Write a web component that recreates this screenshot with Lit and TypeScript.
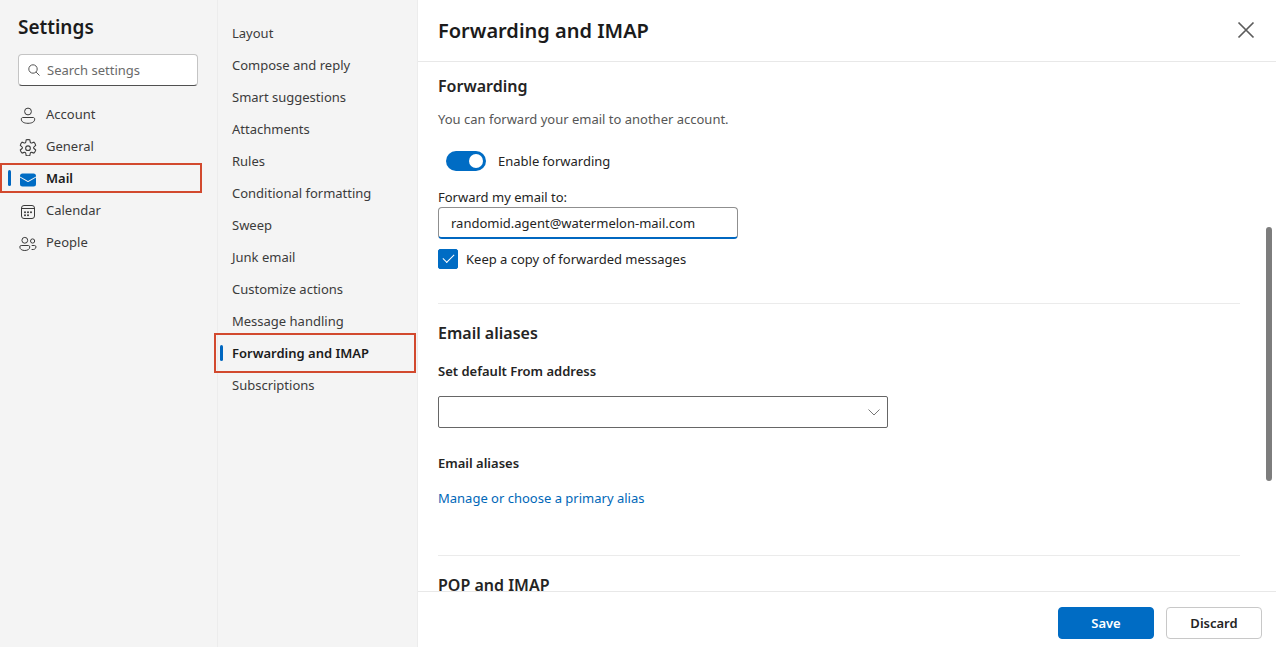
import { LitElement, html, css, svg } from "lit";
import { customElement, state } from "lit/decorators.js";
import { classMap } from "lit/directives/class-map.js";

const icons: Record<string, unknown> = {
  Account: svg`<circle cx="10" cy="5.500" r="3.400"/><path d="M4.800 11.500h10.400c.9 0 1.500.7 1.500 1.600 0 3-3 4.200-6.700 4.200s-6.700-1.200-6.700-4.200c0-.9.600-1.600 1.500-1.600Z"/>`,
  General: svg`<g transform="translate(-.7 -.5) scale(1.07)"><circle cx="10" cy="10" r="2.200"/><path d="M8.300 2.200c1.100-.3 2.300-.3 3.400 0l.4 2.100c.1.6.8 1 1.400.8l2-.7c.8.8 1.400 1.800 1.700 2.900l-1.600 1.400c-.5.4-.5 1.200 0 1.600l1.600 1.400c-.3 1.100-.9 2.100-1.700 2.900l-2-.7c-.6-.2-1.300.2-1.400.8l-.4 2.100c-1.100.3-2.300.3-3.400 0l-.4-2.100c-.1-.6-.8-1-1.400-.8l-2 .7c-.8-.8-1.400-1.800-1.700-2.900l1.600-1.400c.5-.4.5-1.200 0-1.600L2.800 7.300c.3-1.100.9-2.100 1.700-2.900l2 .7c.6.2 1.300-.2 1.400-.8Z"/></g>`,
  Mail: svg`<path class="solid" d="M2 7.600 9.700 12c.2.100.4.100.6 0L18 7.600V14a2.500 2.500 0 0 1-2.500 2.500h-11A2.500 2.500 0 0 1 2 14Z"/><path class="solid" d="M4.500 3.500h11A2.500 2.500 0 0 1 18 6v.5L10 11 2 6.500V6a2.500 2.500 0 0 1 2.500-2.500Z"/>`,
  Calendar: svg`<rect x="3.500" y="3.500" width="13" height="13" rx="2.500"/><path d="M3.500 6.500h13"/><g class="dots"><circle cx="7" cy="10.300" r="1"/><circle cx="10" cy="10.300" r="1"/><circle cx="13" cy="10.300" r="1"/><circle cx="7" cy="13.300" r="1"/><circle cx="10" cy="13.300" r="1"/></g>`,
  People: svg`<circle cx="6.800" cy="6.300" r="2.900"/><circle cx="14.600" cy="7" r="2.100"/><path d="M3.200 11.500h7.200c.8 0 1.400.6 1.400 1.400 0 2.300-2.200 3.600-5 3.600s-5-1.300-5-3.600c0-.8.6-1.400 1.400-1.400ZM13.700 11.500h2.900c.8 0 1.400.6 1.400 1.400 0 1.900-2 3-4.400 2.600"/>`,
};

const sections = ["Account", "General", "Mail", "Calendar", "People"];
const pages = [
  "Layout", "Compose and reply", "Smart suggestions", "Attachments", "Rules",
  "Conditional formatting", "Sweep", "Junk email", "Customize actions",
  "Message handling", "Forwarding and IMAP", "Subscriptions",
];

@customElement("app-root")
export class AppRoot extends LitElement {
  @state() private section = "Mail";
  @state() private page = "Forwarding and IMAP";

  static styles = css`
    :host {
      display: grid;
      grid-template-columns: 218px 200px minmax(0, 1fr);
      height: 100vh;
      overflow: hidden;
      background: #fff;
      color: #242424;
      font: 13px/20px "Noto Sans", sans-serif;
    }
    *, *::before, *::after { box-sizing: border-box; }
    h1, h2, h3, p, ul { margin: 0; padding: 0; }
    button, input, select { font: inherit; color: inherit; margin: 0; }
    svg { fill: none; stroke: currentColor; flex: none; }
    .solid, .dots { fill: currentColor; stroke: none; }

    .sidebar { background: #f4f4f4; border-right: 1px solid #ececec; padding-top: 13px; }
    .title { font-size: 20px; line-height: 28px; font-weight: 600; color: #1b1b1b; }
    .sidebar .title { padding-left: 18px; font-size: 19px; }
    .search {
      display: flex; align-items: center; gap: 7px;
      margin: 13px 19px 13px 18px; height: 32px; padding: 0 9px;
      background: #fff; border: 1px solid #c4c4c4; border-bottom-color: #505050;
      border-radius: 4px; color: #555;
    }
    .search input { border: 0; outline: 0; padding: 0; min-width: 0; flex: 1; background: none; }
    .search input::placeholder { color: #6a6a6a; opacity: 1; }

    ul { list-style: none; }
    li { position: relative; }
    .item {
      display: flex; align-items: center; gap: 8px; width: 100%; height: 32px;
      border: 0; background: none; text-align: left; cursor: pointer;
      padding: 0 0 2px 14px; color: #3b3b3b;
    }
    .sidebar .item { padding-left: 18px; }
    .item.current { font-weight: 600; color: #1b1b1b; }
    .item.current svg { color: #006cc4; }
    .current::before {
      content: ""; position: absolute; left: 2px; top: 7px;
      width: 3px; height: 16px; border-radius: 2px; background: #0067c0;
    }
    .sidebar .current::before { left: 8px; }
    .marker { position: absolute; border: 2px solid #d2492e; pointer-events: none; }
    .sidebar .marker { left: 0; right: 15px; top: 0; height: 30px; }
    .pages .marker { left: -4px; right: 1px; top: -5px; height: 40px; }
    .pages { background: #f4f4f4; border-right: 1px solid #ececec; padding-top: 18px; }

    .panel { display: flex; flex-direction: column; min-height: 0; position: relative; }
    .head {
      display: flex; align-items: center; justify-content: space-between;
      height: 62px; flex: none; padding: 0 20px; border-bottom: 1px solid #e8e8e8;
    }
    .close { display: flex; border: 0; background: none; padding: 0 0 2px; color: #5c5c5c; cursor: pointer; }
    .viewport { position: relative; flex: 1; min-height: 0; overflow: hidden; }
    .content { padding: 12px 36px 0 20px; }
    .group { border-bottom: 1px solid #ebebeb; margin-bottom: 17px; }
    h2 { font-size: 16px; line-height: 24px; font-weight: 600; color: #242424; }
    h3 { font-size: 13px; line-height: 20px; font-weight: 600; }
    .group.forwarding { padding-bottom: 34px; }
    .group.aliases { padding-bottom: 47px; }
    .hint { margin-top: 11px; color: #565656; }
    .row { display: flex; align-items: center; }
    .toggle-row { margin: 22px 0 16px 8px; gap: 12px; }
    .switch {
      appearance: none; width: 40px; height: 20px; border-radius: 10px;
      background: #c8c8c8; padding: 3px; display: flex;
    }
    .switch::before { content: ""; width: 14px; height: 14px; border-radius: 50%; background: #fff; }
    .switch:checked { background: #006cc4; justify-content: flex-end; }
    .label { display: block; }
    .address {
      display: block; width: 300px; max-width: 100%; height: 32px; padding: 1px 12px 0;
      border: 1px solid #8f8f8f; border-bottom: 2px solid #0067c0; border-radius: 4px;
      outline: 0; background: #fff;
    }
    .copy-row { margin-top: 10px; gap: 8px; }
    .check {
      appearance: none; width: 20px; height: 20px; border: 1px solid #616161;
      border-radius: 2px; display: grid; place-items: center;
    }
    .check:checked { background: #006cc4; border-color: #006cc4; }
    .check:checked::before {
      content: ""; width: 11px; height: 6px; border: solid #fff; border-width: 0 0 1px 1px;
      transform: translateY(-2px) rotate(-45deg);
    }
    .from { margin-top: 16px; }
    .from-label { display: block; font-weight: 600; }
    .select { display: grid; width: 450px; max-width: 100%; margin: 15px 0 25px; align-items: center; }
    .select > * { grid-area: 1 / 1; }
    .select select {
      appearance: none; width: 100%; height: 32px; border: 1px solid #666;
      border-radius: 2px; background: #fff; padding: 0 32px 0 8px;
    }
    .select svg { justify-self: end; margin-right: 7px; color: #777; pointer-events: none; }
    .link { display: block; width: fit-content; margin-top: 15px; color: #0067b8; text-decoration: none; }
    .thumb {
      position: absolute; right: 4px; top: 31.2%; height: 48.1%; width: 6px;
      border-radius: 3px; background: #7d7d7d;
    }
    .foot {
      display: flex; justify-content: flex-end; gap: 12px; flex: none;
      padding: 15px 14px 8px; border-top: 1px solid #e8e8e8;
    }
    .button {
      width: 96px; height: 32px; border-radius: 4px; border: 1px solid #c8c8c8;
      background: #fff; font-weight: 600; padding: 0; cursor: pointer;
    }
    .button.primary { background: #006cc4; border-color: #006cc4; color: #fff; }
  `;

  private renderItem(name: string, selected: boolean, marked: boolean, pick: () => void, icon?: unknown) {
    return html`<li>
      <button class=${classMap({ item: true, current: selected })} @click=${pick}>
        ${icon ? html`<svg width="20" height="20" viewBox="0 -2 20 20">${icon}</svg>` : null}${name}
      </button>
      ${marked ? html`<div class="marker"></div>` : null}
    </li>`;
  }

  render() {
    return html`
      <nav class="sidebar" aria-label="Settings">
        <h1 class="title">Settings</h1>
        <label class="search">
          <svg width="12" height="12" viewBox="0 0 12 12"><circle cx="5" cy="5" r="4.200"/><path d="m8.100 8.100 3.400 3.400"/></svg>
          <input type="search" placeholder="Search settings" aria-label="Search settings" />
        </label>
        <ul>
          ${sections.map((s) => this.renderItem(s, s === this.section, s === "Mail", () => (this.section = s), icons[s]))}
        </ul>
      </nav>
      <nav class="pages" aria-label="Mail">
        <ul>
          ${pages.map((p) => this.renderItem(p, p === this.page, p === "Forwarding and IMAP", () => (this.page = p)))}
        </ul>
      </nav>
      <main class="panel">
        <header class="head">
          <h1 class="title">Forwarding and IMAP</h1>
          <button class="close" aria-label="Close">
            <svg width="20" height="20" viewBox="0 0 20 20" stroke-width="1.700"><path d="m2.500 2.500 15 15m0-15-15 15"/></svg>
          </button>
        </header>
        <div class="viewport">
          <div class="content">
            <section class="group forwarding">
              <h2>Forwarding</h2>
              <p class="hint">You can forward your email to another account.</p>
              <div class="row toggle-row">
                <input class="switch" id="enable" type="checkbox" role="switch" checked />
                <label for="enable">Enable forwarding</label>
              </div>
              <label class="label" for="address">Forward my email to:</label>
              <input class="address" id="address" type="email" value="randomid.agent@watermelon-mail.com" />
              <div class="row copy-row">
                <input class="check" id="copy" type="checkbox" checked />
                <label for="copy">Keep a copy of forwarded messages</label>
              </div>
            </section>
            <section class="group aliases">
              <h2>Email aliases</h2>
              <div class="from">
                <label class="from-label" for="from">Set default From address</label>
                <div class="select">
                  <select id="from"><option></option></select>
                  <svg width="14" height="14" viewBox="0 0 14 14"><path d="m1.500 4.500 5.500 5.500 5.500-5.500"/></svg>
                </div>
              </div>
              <h3>Email aliases</h3>
              <a class="link" href="#">Manage or choose a primary alias</a>
            </section>
            <section>
              <h2>POP and IMAP</h2>
            </section>
          </div>
          <div class="thumb"></div>
        </div>
        <footer class="foot">
          <button class="button primary">Save</button>
          <button class="button">Discard</button>
        </footer>
      </main>
    `;
  }
}
